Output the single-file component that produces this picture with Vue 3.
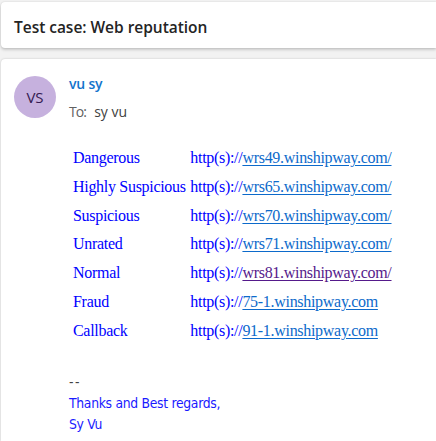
<template>
  <div class="mail">
    <header class="subject">
      <h1 class="subject-title">Test case: Web reputation</h1>
    </header>
    <article class="message">
      <div class="avatar">VS</div>
      <div class="content">
        <div class="sender">vu sy</div>
        <div class="recipient"><span class="to">To:</span><span>sy vu</span></div>
        <div class="links">
          <div v-for="row in rows" :key="row.label" class="link-row">
            <span class="label">{{ row.label }}</span>
            <span class="url">http(s)://<a :class="{ visited: row.visited }" href="#" @click.prevent="row.visited = true">{{ row.host }}</a></span>
          </div>
        </div>
        <div class="signature">
          <div class="dashes">--</div>
          <div class="thanks">Thanks and Best regards,</div>
          <div class="name">Sy Vu</div>
        </div>
      </div>
    </article>
  </div>
</template>

<script setup>
import { ref } from 'vue';

const rows = ref([
  { label: 'Dangerous', host: 'wrs49.winshipway.com/', visited: false },
  { label: 'Highly Suspicious', host: 'wrs65.winshipway.com/', visited: false },
  { label: 'Suspicious', host: 'wrs70.winshipway.com/', visited: false },
  { label: 'Unrated', host: 'wrs71.winshipway.com/', visited: false },
  { label: 'Normal', host: 'wrs81.winshipway.com/', visited: true },
  { label: 'Fraud', host: '75-1.winshipway.com', visited: false },
  { label: 'Callback', host: '91-1.winshipway.com', visited: false }
]);
</script>

<style>
body { overflow: hidden; background: #f2f2f2; }
</style>

<style scoped>
.mail { height: 441px; box-sizing: border-box; padding: 2px 0 0 1px; display: flex; flex-direction: column; gap: 11px; overflow: hidden; background: #f2f2f2; font-family: "Open Sans", "Noto Sans", sans-serif; white-space: nowrap; }
.subject { height: 46px; flex-shrink: 0; display: flex; align-items: center; padding-left: 13px; background: #fff; border-radius: 4px 0 0 4px; box-shadow: 0 0 2px rgba(0,0,0,0.14), 0 2px 3px rgba(0,0,0,0.16); }
.subject-title { margin: 0; padding-top: 3px; font-size: 15.5px; font-weight: 600; line-height: 20px; letter-spacing: -0.03px; color: #242424; }
.message { flex: 1; display: flex; align-items: flex-start; gap: 13px; padding: 17px 0 0 13px; background: #fff; border-radius: 4px 0 0 0; box-shadow: 0 0 2px rgba(0,0,0,0.22); }
.avatar { width: 42px; height: 42px; flex-shrink: 0; border-radius: 50%; background: #c6b1de; color: #341a51; font-size: 15px; line-height: 43px; text-align: center; }
.sender { font-size: 14px; font-weight: 600; line-height: 16px; color: #1374cc; letter-spacing: -0.2px; }
.recipient { display: flex; gap: 8px; margin-top: 11px; font-size: 14px; line-height: 18px; color: #424242; }
.to { color: #616161; letter-spacing: -0.9px; }
.links { margin: 23px 0 0 4px; font-family: "Liberation Serif", "Times New Roman", serif; font-size: 16px; letter-spacing: -0.3px; color: #00f; }
.link-row { display: flex; height: 28.75px; line-height: 28px; }
.label { width: 117.3px; }
.link-row a { color: #0c6acb; text-decoration: underline; text-underline-offset: 2px; }
.link-row a.visited { color: #551a8b; }
.signature { margin-top: 27px; font-family: "DejaVu Sans Condensed", "DejaVu Sans", sans-serif; font-size: 13.8px; letter-spacing: -0.3px; line-height: 21px; color: #1a1aff; }
.dashes { color: #424242; letter-spacing: 1.5px; }
</style>
